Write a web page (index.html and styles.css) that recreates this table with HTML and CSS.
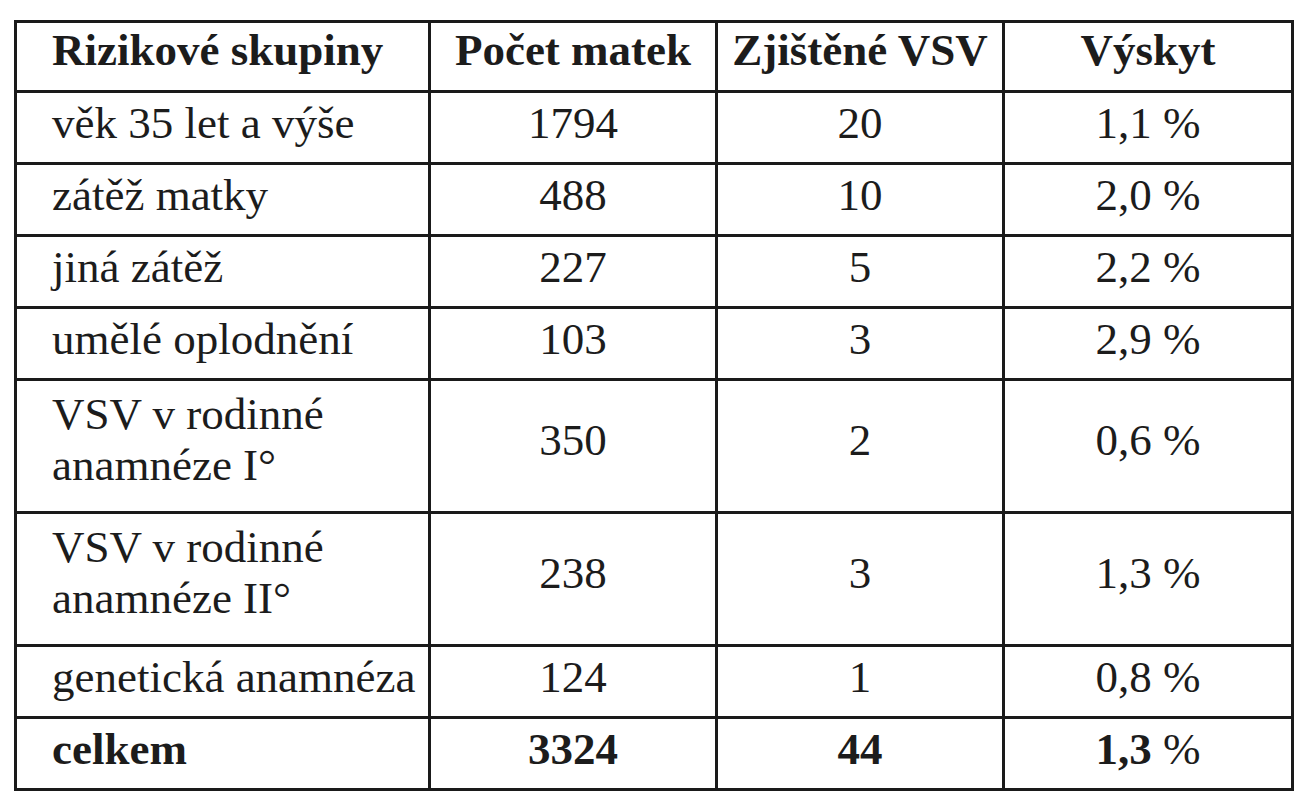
FILE: index.html
```html
<!DOCTYPE html>
<html lang="cs">
<head>
<meta charset="utf-8">
<title>Rizikové skupiny</title>
<link rel="stylesheet" href="styles.css">
</head>
<body>
<table class="data">
  <colgroup>
    <col class="c1"><col class="c2"><col class="c3"><col class="c4">
  </colgroup>
  <thead>
    <tr class="head">
      <th class="label">Rizikové skupiny</th>
      <th>Počet matek</th>
      <th>Zjištěné VSV</th>
      <th>Výskyt</th>
    </tr>
  </thead>
  <tbody>
    <tr class="row"><td class="label">věk 35 let a výše</td><td>1794</td><td>20</td><td>1,1 %</td></tr>
    <tr class="row"><td class="label">zátěž matky</td><td>488</td><td>10</td><td>2,0 %</td></tr>
    <tr class="row"><td class="label">jiná zátěž</td><td>227</td><td>5</td><td>2,2 %</td></tr>
    <tr class="row"><td class="label">umělé oplodnění</td><td>103</td><td>3</td><td>2,9 %</td></tr>
    <tr class="tall"><td class="label">VSV v rodinné<br>anamnéze I°</td><td>350</td><td>2</td><td>0,6 %</td></tr>
    <tr class="tall"><td class="label">VSV v rodinné<br>anamnéze II°</td><td>238</td><td>3</td><td>1,3 %</td></tr>
    <tr class="row"><td class="label">genetická anamnéza</td><td>124</td><td>1</td><td>0,8 %</td></tr>
    <tr class="row total"><td class="label">celkem</td><td>3324</td><td>44</td><td>1,3 <span class="unit">%</span></td></tr>
  </tbody>
</table>
</body>
</html>
```

FILE: styles.css
```css
html, body {
  margin: 0;
  padding: 0;
  background: #ffffff;
}

body {
  padding: 20px 0 0 14px;
  font-family: "Liberation Serif", "Times New Roman", serif;
  color: #1c1c1c;
}

.data {
  border-collapse: collapse;
  table-layout: fixed;
  width: 1277px;
  font-size: 45px;
  line-height: 51px;
}

.c1 { width: 414px; }
.c2 { width: 287px; }
.c3 { width: 287px; }
.c4 { width: 289px; }

.data th,
.data td {
  border: 3px solid #1a1a1a;
  text-align: center;
  vertical-align: middle;
  padding: 0 0 8px 0;
  white-space: nowrap;
}

.data th {
  font-weight: bold;
  padding-bottom: 12px;
}

.data .label {
  text-align: left;
  padding-left: 35px;
}

.head { height: 70px; }
.row { height: 72px; }
.tall { height: 133px; }

.tall td {
  padding-bottom: 12px;
}

.total td {
  font-weight: bold;
}

.total .unit {
  font-weight: normal;
}
```
